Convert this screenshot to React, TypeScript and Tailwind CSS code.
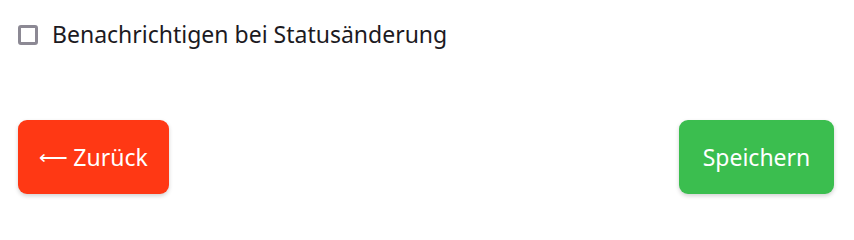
export default function App() {
  return (
    <div className="w-[854px] h-[217px] bg-white pl-[18px] pr-[20px] pt-[22px]" style={{ fontFamily: '"Noto Sans", "Open Sans", sans-serif' }}>
      <label className="flex items-center gap-[14px] h-[25px]">
        <span className="w-[20px] h-[20px] rounded-[3px] border-[3px] border-[#8c8994] bg-white" />
        <span className="text-[23px] text-[#1c1a1f] leading-none">Benachrichtigen bei Statusänderung</span>
      </label>
      <div className="flex justify-between mt-[73px]">
        <button className="w-[151px] h-[74px] rounded-[9px] bg-[#ff3814] text-white text-[23px] shadow-[0_2px_4px_rgba(0,0,0,0.18)] flex items-center justify-center">
          <span className="font-['DejaVu_Sans'] font-light text-[20px] mr-[5px]">⟵</span>Zurück
        </button>
        <button className="w-[155px] h-[74px] rounded-[9px] bg-[#3bbe4f] text-white text-[23px] shadow-[0_2px_4px_rgba(0,0,0,0.18)]">
          Speichern
        </button>
      </div>
    </div>
  );
}
